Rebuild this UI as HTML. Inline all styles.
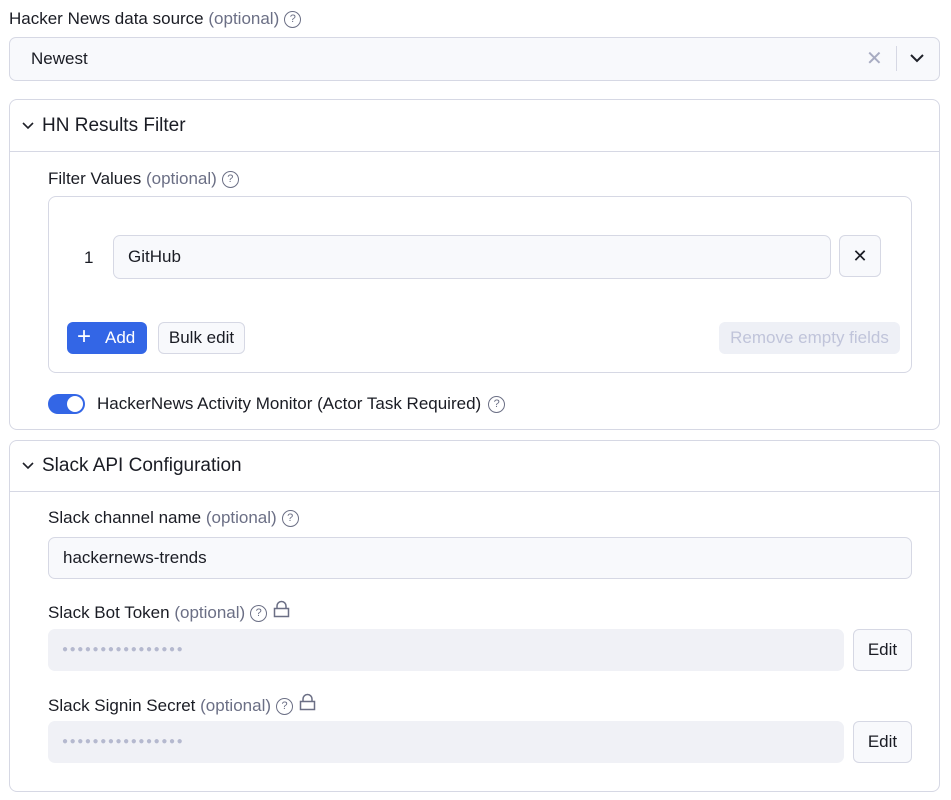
<!DOCTYPE html>
<html><head><meta charset="utf-8"><style>
*{box-sizing:border-box;margin:0;padding:0}
body{width:951px;height:800px;background:#fff;font-family:"Liberation Sans",sans-serif;color:#1a1c24;position:relative;overflow:hidden}
.a{position:absolute}
.lbl{font-size:17px;white-space:nowrap;line-height:20px}
.opt{color:#6b6f85}
.q{display:inline-block;width:17px;height:17px;border:1.3px solid #6b6f85;border-radius:50%;font-size:11px;line-height:15px;text-align:center;color:#6b6f85;vertical-align:2px;margin-left:5px}
.lk{display:inline-block;vertical-align:0px;margin-left:6px}
.box{border:1px solid #d6d8e4;border-radius:8px}
.inp{background:#f8f9fc;border:1px solid #d6d8e4;border-radius:7px;font-size:17px;line-height:40px;padding-left:14px}
.btn{border:1px solid #d6d8e4;border-radius:6px;background:#f8f9fc;font-size:17px;text-align:center}
.h{font-size:19px}
.dots{color:#b5b9cf;font-size:10px;letter-spacing:1.6px;line-height:41px;padding-left:14px}
</style></head><body>
<div class="a lbl" style="left:9px;top:9px">Hacker News data source <span class="opt">(optional)</span><span class="q">?</span></div>
<div class="a inp" style="left:9px;top:37px;width:931px;height:44px;padding-left:21px;line-height:42px">Newest</div>
<div class="a" style="left:866px;top:46px;color:#a8acc2;font-size:20px">✕</div>
<div class="a" style="left:896px;top:46px;width:1px;height:25px;background:#d6d8e4"></div>
<svg class="a" style="left:909px;top:52px" width="16" height="12"><path d="M2 3l6 6 6-6" stroke="#1f2129" stroke-width="2" fill="none"/></svg>

<div class="a box" style="left:9px;top:99px;width:931px;height:331px"></div>
<svg class="a" style="left:21px;top:121px" width="14" height="10"><path d="M2 2l5 5 5-5" stroke="#1f2129" stroke-width="1.6" fill="none"/></svg>
<div class="a h" style="left:42px;top:115px">HN Results Filter</div>
<div class="a" style="left:10px;top:151px;width:929px;height:1px;background:#d6d8e4"></div>
<div class="a lbl" style="left:48px;top:169px">Filter Values <span class="opt">(optional)</span><span class="q">?</span></div>
<div class="a box" style="left:48px;top:196px;width:864px;height:177px"></div>
<div class="a" style="left:84px;top:248px;font-size:17px">1</div>
<div class="a inp" style="left:113px;top:235px;width:718px;height:44px;line-height:42px">GitHub</div>
<div class="a btn" style="left:839px;top:235px;width:42px;height:42px;line-height:40px;font-size:18px">✕</div>
<div class="a" style="left:67px;top:322px;width:80px;height:32px;background:#3366e6;border-radius:6px;color:#fff;font-size:17px;line-height:32px"><span style="position:absolute;left:10px;font-size:24px;top:-1px">+</span><span style="position:absolute;left:38px">Add</span></div>
<div class="a btn" style="left:158px;top:322px;width:87px;height:32px;line-height:30px">Bulk edit</div>
<div class="a" style="left:719px;top:322px;width:181px;height:32px;background:#eef0f6;border-radius:6px;color:#c0c4da;font-size:17px;line-height:32px;text-align:center">Remove empty fields</div>
<div class="a" style="left:48px;top:394px;width:37px;height:20px;background:#3366e6;border-radius:10px"><div class="a" style="left:19px;top:2px;width:16px;height:16px;background:#fff;border-radius:50%"></div></div>
<div class="a lbl" style="left:97px;top:394px">HackerNews Activity Monitor (Actor Task Required)<span class="q" style="margin-left:7px">?</span></div>

<div class="a box" style="left:9px;top:440px;width:931px;height:352px"></div>
<svg class="a" style="left:21px;top:461px" width="14" height="10"><path d="M2 2l5 5 5-5" stroke="#1f2129" stroke-width="1.6" fill="none"/></svg>
<div class="a h" style="left:42px;top:455px">Slack API Configuration</div>
<div class="a" style="left:10px;top:491px;width:929px;height:1px;background:#d6d8e4"></div>
<div class="a lbl" style="left:48px;top:508px">Slack channel name <span class="opt">(optional)</span><span class="q">?</span></div>
<div class="a inp" style="left:48px;top:537px;width:864px;height:42px;line-height:40px">hackernews-trends</div>
<div class="a lbl" style="left:48px;top:600px">Slack Bot Token <span class="opt">(optional)</span><span class="q">?</span><svg class="lk" width="17" height="18"><path d="M4 8V6a4.5 4.5 0 0 1 9 0v2M1.5 8.5h14v8h-14z" stroke="#6b6f85" stroke-width="1.5" fill="none"/></svg></div>
<div class="a dots" style="left:48px;top:629px;width:796px;height:42px;background:#f0f1f6;border-radius:7px">●●●●●●●●●●●●●●●●</div>
<div class="a btn" style="left:853px;top:629px;width:59px;height:42px;line-height:40px">Edit</div>
<div class="a lbl" style="left:48px;top:693px">Slack Signin Secret <span class="opt">(optional)</span><span class="q">?</span><svg class="lk" width="17" height="18"><path d="M4 8V6a4.5 4.5 0 0 1 9 0v2M1.5 8.5h14v8h-14z" stroke="#6b6f85" stroke-width="1.5" fill="none"/></svg></div>
<div class="a dots" style="left:48px;top:721px;width:796px;height:42px;background:#f0f1f6;border-radius:7px">●●●●●●●●●●●●●●●●</div>
<div class="a btn" style="left:853px;top:721px;width:59px;height:42px;line-height:40px">Edit</div>
</body></html>
